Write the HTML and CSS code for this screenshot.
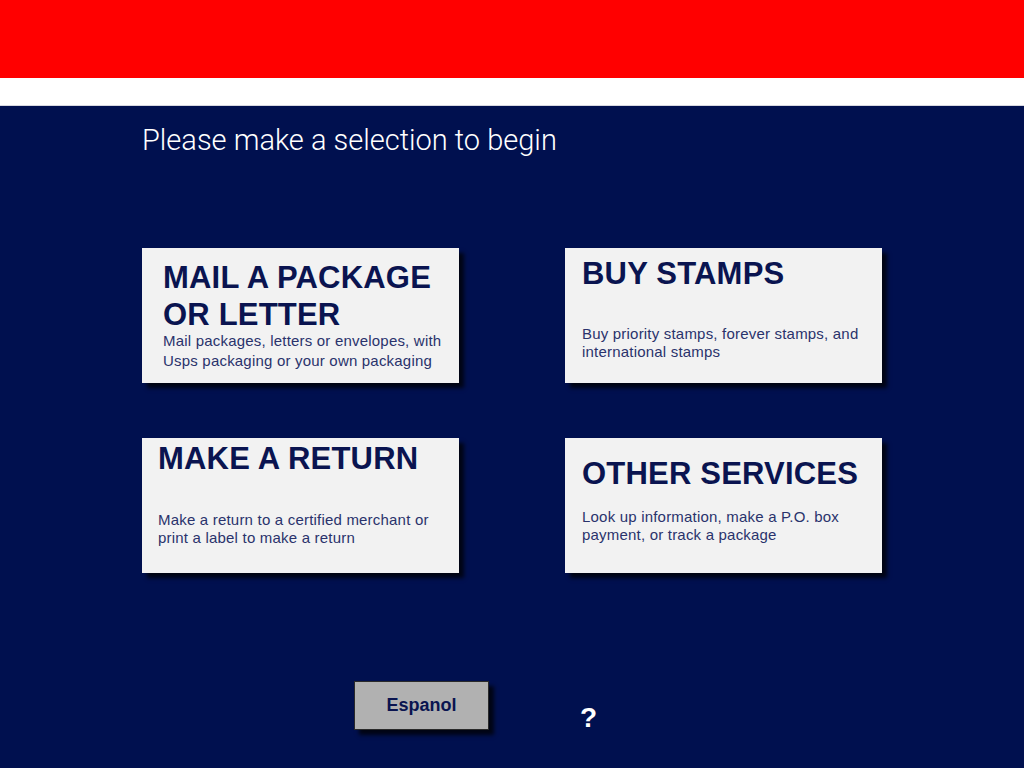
FILE: index.html
```html
<!DOCTYPE html>
<html>
<head>
<meta charset="utf-8">
<link rel="stylesheet" href="styles.css">
</head>
<body>
<header class="top-band"></header>
<div class="white-band"></div>
<main class="main">
  <h1 class="prompt">Please make a selection to begin</h1>
  <div class="grid">
    <div class="card card-mail">
      <h2 class="card-title">MAIL A PACKAGE<br>OR LETTER</h2>
      <p class="card-desc">Mail packages, letters or envelopes, with<br>Usps packaging or your own packaging</p>
    </div>
    <div class="card card-stamps">
      <h2 class="card-title">BUY STAMPS</h2>
      <p class="card-desc">Buy priority stamps, forever stamps, and<br>international stamps</p>
    </div>
    <div class="card card-return">
      <h2 class="card-title">MAKE A RETURN</h2>
      <p class="card-desc">Make a return to a certified merchant or<br>print a label to make a return</p>
    </div>
    <div class="card card-other">
      <h2 class="card-title">OTHER SERVICES</h2>
      <p class="card-desc">Look up information, make a P.O. box<br>payment, or track a package</p>
    </div>
  </div>
  <div class="bottom">
    <div class="lang-btn">Espanol</div>
    <div class="help">?</div>
  </div>
</main>
</body>
</html>
```

FILE: styles.css
```css
html, body {
  margin: 0;
  padding: 0;
}
body {
  width: 1024px;
  height: 768px;
  overflow: hidden;
  background: #00104f;
  font-family: "Liberation Sans", Arial, sans-serif;
}
.top-band {
  height: 78px;
  background: #ff0000;
}
.white-band {
  height: 27px;
  background: #ffffff;
  border-bottom: 1px solid #d8d8e0;
}
.main {
  background: #00104f;
  height: 662px;
  padding: 0 0 0 142px;
  box-sizing: border-box;
}
.prompt {
  margin: 0;
  padding-top: 17px;
  font-family: Roboto, "Liberation Sans", sans-serif;
  font-weight: 300;
  font-size: 29px;
  line-height: 34px;
  color: #ffffff;
  height: 142px;
  box-sizing: border-box;
}
.grid {
  display: grid;
  grid-template-columns: 317px 317px;
  grid-template-rows: 135px 135px;
  column-gap: 106px;
  row-gap: 55px;
}
.card {
  background: #f2f2f2;
  box-shadow: 5px 5px 4px rgba(0, 0, 0, 0.75);
  box-sizing: border-box;
  display: flex;
  flex-direction: column;
}
.card-title {
  margin: 0;
  font-weight: 700;
  font-size: 31px;
  line-height: 37px;
  letter-spacing: 0.2px;
  color: #0a1450;
}
.card-desc {
  margin: 0;
  font-size: 15px;
  line-height: 18px;
  letter-spacing: 0.2px;
  color: #2a336c;
}
.card-mail {
  padding: 11px 0 0 21px;
}
.card-mail .card-desc {
  line-height: 20px;
  margin-top: -2px;
}
.card-stamps {
  padding: 7px 0 0 17px;
}
.card-stamps .card-desc {
  margin-top: 33px;
}
.card-return {
  padding: 2px 0 0 16px;
}
.card-return .card-desc {
  margin-top: 34px;
}
.card-other {
  padding: 17px 0 0 17px;
}
.card-other .card-desc {
  margin-top: 16px;
}
.bottom {
  display: flex;
  align-items: flex-start;
  margin-top: 108px;
  padding-left: 212px;
}
.lang-btn {
  width: 135px;
  height: 49px;
  box-sizing: border-box;
  background: #b1b1b1;
  border: 1px solid #2a2a2a;
  box-shadow: 5px 5px 4px rgba(0, 0, 0, 0.75);
  display: flex;
  align-items: center;
  justify-content: center;
  font-weight: 700;
  font-size: 18px;
  color: #0a1450;
}
.help {
  margin-left: 91px;
  margin-top: 21px;
  font-weight: 700;
  font-size: 28px;
  line-height: 32px;
  color: #ffffff;
}
```
